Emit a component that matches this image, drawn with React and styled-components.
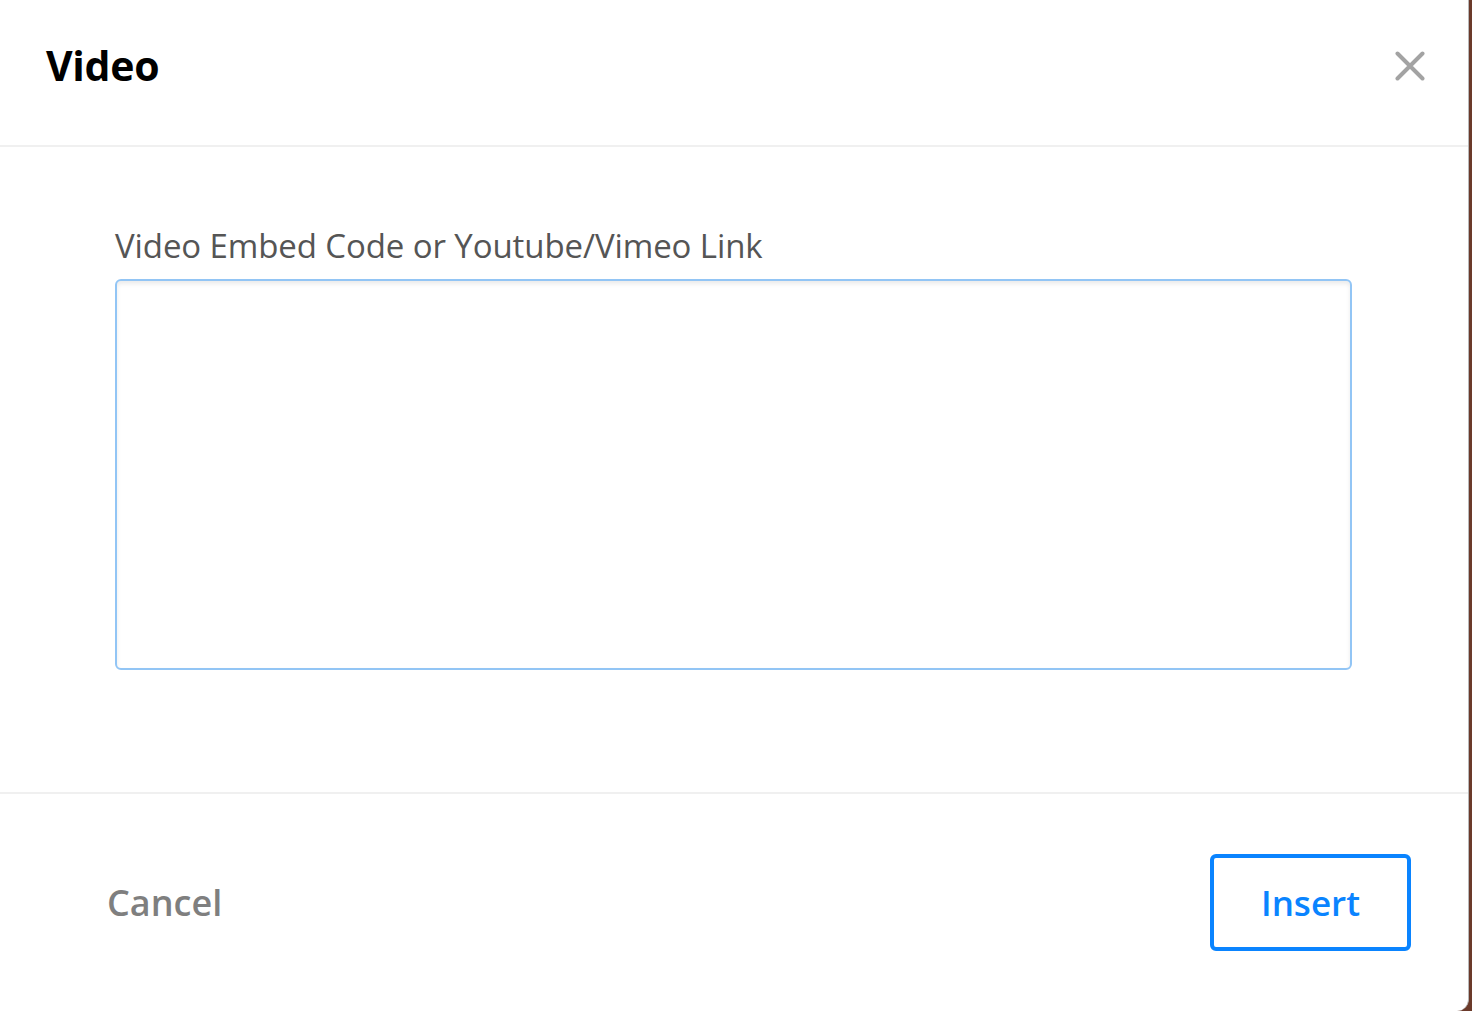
import React from "react";
import styled, { createGlobalStyle } from "styled-components";

const Global = createGlobalStyle`
  html, body { margin: 0; padding: 0; }
  body {
    background: #6b3a2a;
    font-family: "Open Sans", "DejaVu Sans", sans-serif;
    overflow: hidden;
  }
`;

const Dialog = styled.div`
  width: 1469px;
  height: 1011px;
  background: #fff;
  border-right: 1px solid #b8b8b8;
  border-bottom-right-radius: 12px;
  display: flex;
  flex-direction: column;
  box-sizing: border-box;
`;

const Header = styled.header`
  height: 147px;
  flex: none;
  box-sizing: border-box;
  display: flex;
  align-items: center;
  justify-content: space-between;
  padding: 0 43px 16px 46px;
  border-bottom: 2px solid #f0f0f0;
`;

const Title = styled.h1`
  margin: 0;
  font-size: 41px;
  font-weight: 700;
  color: #000;
  letter-spacing: -0.3px;
`;

const CloseButton = styled.button`
  border: 0;
  background: none;
  padding: 0;
  width: 30px;
  height: 30px;
  margin-top: 3px;
  display: flex;
  align-items: center;
  justify-content: center;
  cursor: pointer;
`;

const Body = styled.main`
  flex: 1;
  padding: 82px 116px 0 115px;
  display: flex;
  flex-direction: column;
`;

const Label = styled.label`
  font-size: 33px;
  color: #555;
  line-height: 1;
  margin-bottom: 17px;
  letter-spacing: -0.1px;
`;

const TextArea = styled.textarea`
  width: 100%;
  height: 391px;
  box-sizing: border-box;
  border: 2px solid #92c5f5;
  border-radius: 6px;
  box-shadow: inset 0 3px 4px rgba(0, 0, 0, 0.08);
  resize: none;
  outline: none;
  font-family: inherit;
  font-size: 24px;
`;

const Footer = styled.footer`
  height: 219px;
  flex: none;
  border-top: 2px solid #f0f0f0;
  display: flex;
  align-items: center;
  justify-content: space-between;
  padding: 0 57px 0 107px;
  box-sizing: border-box;
`;

const TextButton = styled.button`
  border: 0;
  background: none;
  padding: 0;
  font-family: inherit;
  font-size: 36px;
  font-weight: 600;
  color: #7f7f7f;
  cursor: pointer;
`;

const OutlineButton = styled.button`
  width: 201px;
  height: 97px;
  box-sizing: border-box;
  border: 4px solid #0a84ff;
  border-radius: 6px;
  background: #fff;
  color: #0a84ff;
  font-family: inherit;
  font-size: 35px;
  font-weight: 600;
  cursor: pointer;
`;

export default function App() {
  return (
    <>
      <Global />
      <Dialog>
        <Header>
          <Title>Video</Title>
          <CloseButton aria-label="Close">
            <svg width="30" height="30" viewBox="0 0 30 30">
              <path d="M2.5 2.5 L27.5 27.5 M27.5 2.5 L2.5 27.5" stroke="#a3a3a3" strokeWidth="4" strokeLinecap="round" />
            </svg>
          </CloseButton>
        </Header>
        <Body>
          <Label>Video Embed Code or Youtube/Vimeo Link</Label>
          <TextArea />
        </Body>
        <Footer>
          <TextButton>Cancel</TextButton>
          <OutlineButton>Insert</OutlineButton>
        </Footer>
      </Dialog>
    </>
  );
}
